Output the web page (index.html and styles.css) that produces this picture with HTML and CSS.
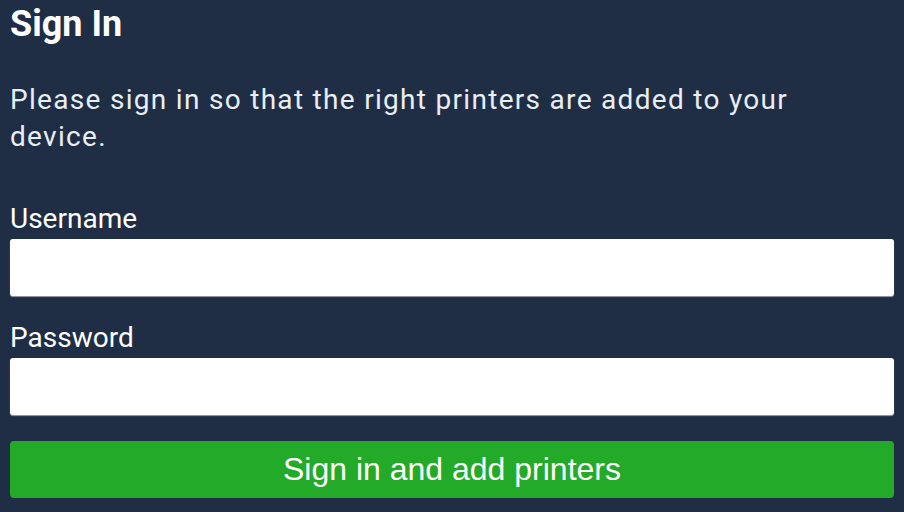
FILE: index.html
```html
<!DOCTYPE html>
<html lang="en">
<head>
    <meta charset="UTF-8">
    <meta name="viewport" content="width=device-width, initial-scale=1.0">
    <title>Sign In</title>
    <link rel="stylesheet" href="styles.css">
</head>
<body>

<h1 class="title">Sign In</h1>

<p class="intro">Please sign in so that the right printers are added to your device.</p>

<form class="login-form" onsubmit="return false;">
    <label class="field-label" for="username">Username</label>
    <input class="field-input" type="text" id="username" name="username">

    <label class="field-label" for="password">Password</label>
    <input class="field-input" type="password" id="password" name="password">

    <!-- Botón principal -->
    <button class="submit-button" type="submit">Sign in and add printers</button>
</form>

</body>
</html>
```

FILE: styles.css
```css
body {
    margin: 0;
    padding: 0 10px;
    background-color: #1f2e45;
    color: #ffffff;
    font-family: Roboto, "Liberation Sans", sans-serif;
}
.title {
    margin: 1px 0 0 0;
    font-size: 36px;
    line-height: 46px;
    font-weight: 700;
}
.intro {
    margin: 34px 0 0 0;
    max-width: 805px;
    font-size: 28px;
    line-height: 37px;
    letter-spacing: 1.3px;
    color: #e9eef4;
}
.login-form {
    display: flex;
    flex-direction: column;
    margin-top: 45px;
}
.field-label {
    font-size: 28px;
    line-height: 37px;
    margin-bottom: 2px;
}
.field-input {
    height: 57px;
    box-sizing: border-box;
    border: none;
    border-radius: 3px;
    background-color: #ffffff;
    box-shadow: 0 1px 1px #9aa0a8;
    margin-bottom: 23px;
    font-size: 24px;
    padding: 0 12px;
}
.submit-button {
    margin-top: 3px;
    height: 57px;
    border: none;
    border-radius: 4px;
    background-color: #24aa29;
    color: #ffffff;
    font-family: "Liberation Sans", Arial, sans-serif;
    font-size: 32px;
    cursor: pointer;
}
.submit-button:hover {
    background-color: #209a25;
}
```
